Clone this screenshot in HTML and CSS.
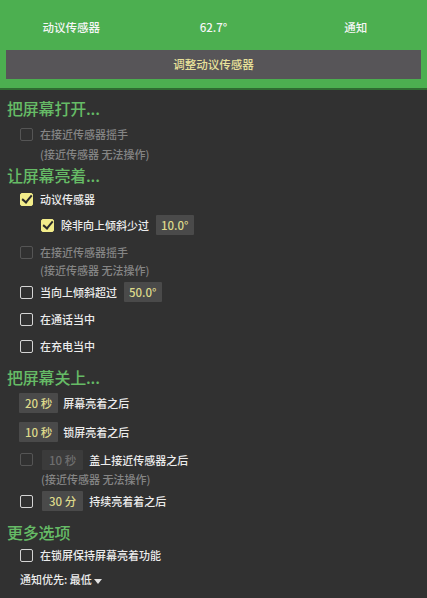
FILE: index.html
```html
<!DOCTYPE html>
<html lang="zh">
<head>
    <meta charset="UTF-8">
    <meta name="viewport" content="width=device-width, initial-scale=1.0">
    <title>动议传感器</title>
    <link rel="stylesheet" href="styles.css">
</head>
<body>
    <div class="header">
        <div class="tabs">
            <div class="tab">动议传感器</div>
            <div class="tab">62.7°</div>
            <div class="tab">通知</div>
        </div>
        <div class="adjust-btn">调整动议传感器</div>
    </div>

    <div class="content">
        <!-- turn screen on -->
        <div class="heading">把屏幕打开...</div>
        <div class="item disabled first-item">
            <span class="cb"></span>
            <div class="lines">
                <div>在接近传感器摇手</div>
                <div>(接近传感器 无法操作)</div>
            </div>
        </div>

        <!-- keep screen on -->
        <div class="heading">让屏幕亮着...</div>
        <div class="row">
            <span class="cb checked"></span>
            <span>动议传感器</span>
        </div>
        <div class="row nested">
            <span class="cb checked"></span>
            <span>除非向上倾斜少过</span>
            <span class="val">10.0°</span>
        </div>
        <div class="item disabled">
            <span class="cb"></span>
            <div class="lines">
                <div>在接近传感器摇手</div>
                <div>(接近传感器 无法操作)</div>
            </div>
        </div>
        <div class="row">
            <span class="cb"></span>
            <span>当向上倾斜超过</span>
            <span class="val">50.0°</span>
        </div>
        <div class="row h28">
            <span class="cb"></span>
            <span>在通话当中</span>
        </div>
        <div class="row">
            <span class="cb"></span>
            <span>在充电当中</span>
        </div>

        <!-- turn screen off -->
        <div class="heading gap">把屏幕关上...</div>
        <div class="row h29">
            <span class="val first">20 秒</span>
            <span>屏幕亮着之后</span>
        </div>
        <div class="row h29">
            <span class="val first">10 秒</span>
            <span>锁屏亮着之后</span>
        </div>
        <div class="dim-box">
            <div class="row h27">
                <span class="cb"></span>
                <span class="val off">10 秒</span>
                <span>盖上接近传感器之后</span>
            </div>
            <div class="sub">(接近传感器 无法操作)</div>
        </div>
        <div class="row h28">
            <span class="cb"></span>
            <span class="val">30 分</span>
            <span>持续亮着着之后</span>
        </div>

        <!-- more -->
        <div class="heading gap-sm">更多选项</div>
        <div class="row h24">
            <span class="cb"></span>
            <span>在锁屏保持屏幕亮着功能</span>
        </div>
        <div class="priority">通知优先: 最低<span class="caret"></span></div>
    </div>
</body>
</html>
```

FILE: styles.css
```css
body {
    margin: 0;
    background: #313131;
    color: #ececec;
    font-family: "Noto Sans CJK SC", "Noto Sans", sans-serif;
    font-size: 11px;
    font-weight: 500;
    width: 427px;
    height: 598px;
    overflow: hidden;
}
.header {
    background: #4caf50;
    padding-bottom: 9px;
    border-bottom: 2px solid #2f6a31;
}
.tabs {
    display: grid;
    grid-template-columns: 1fr 1fr 1fr;
    height: 46px;
    padding-top: 4px;
    align-items: center;
    text-align: center;
    color: #f6f6f6;
    font-size: 11.5px;
}
.adjust-btn {
    margin: 0 6px;
    height: 29px;
    line-height: 29px;
    background: #575558;
    color: #e8e19a;
    text-align: center;
    font-size: 11.5px;
}
.content {
    padding: 7px 0 0 0;
}
.heading {
    color: #66bb66;
    font-size: 16px;
    line-height: 22px;
    padding-left: 7px;
    letter-spacing: -0.2px;
}
.heading.gap {
    margin-top: 7px;
}
.heading.gap-sm {
    margin-top: 6px;
}
.row {
    display: flex;
    align-items: center;
    height: 26px;
    padding-left: 20px;
}
.row.h24 { height: 24px; }
.row.h27 { height: 27px; }
.row.h28 { height: 28px; }
.row.h29 { height: 29px; }
.row.nested {
    padding-left: 41px;
}
.cb {
    width: 11px;
    height: 11px;
    border: 1.5px solid #d4d4d4;
    border-radius: 2px;
    margin-right: 7px;
    flex: none;
    position: relative;
}
.cb.checked {
    background: #f2ec8a;
    border-color: #f2ec8a;
}
/* check mark */
.cb.checked::after {
    content: "";
    position: absolute;
    left: 3px;
    top: -1px;
    width: 4px;
    height: 8px;
    border: solid #2a2a2a;
    border-width: 0 2px 2px 0;
    transform: rotate(40deg);
}
.val {
    background: #4a4a4a;
    color: #ddd98a;
    height: 20px;
    line-height: 20px;
    padding: 0 5px;
    margin-left: 7px;
    border-radius: 1px;
    font-size: 11.5px;
}
.val.first {
    margin-left: -1px;
    margin-right: 5px;
    padding: 0 6px;
}
.row .cb + .val {
    margin-left: 2px;
    margin-right: 6px;
    padding: 0 7px;
}
.val.off {
    background: #3b3b3b;
    color: #6e6e6e;
}
.item {
    display: flex;
    align-items: flex-start;
    padding: 5px 0 0 20px;
}
.item .cb {
    margin-top: 3px;
}
.item.disabled {
    color: #858585;
}
.item.disabled .cb,
.dim-box .cb {
    border-color: #555;
}
.lines div {
    line-height: 18px;
}
.first-item .lines div {
    line-height: 20px;
}
.first-item .cb {
    margin-top: 4px;
}
.dim-box .sub {
    color: #858585;
    padding-left: 41px;
    line-height: 12px;
    margin-bottom: 2px;
}
.priority {
    padding-left: 20px;
    line-height: 24px;
}
.caret {
    display: inline-block;
    width: 0;
    height: 0;
    border-left: 4px solid transparent;
    border-right: 4px solid transparent;
    border-top: 5px solid #e2e2e2;
    margin-left: 2px;
    vertical-align: middle;
}
```
